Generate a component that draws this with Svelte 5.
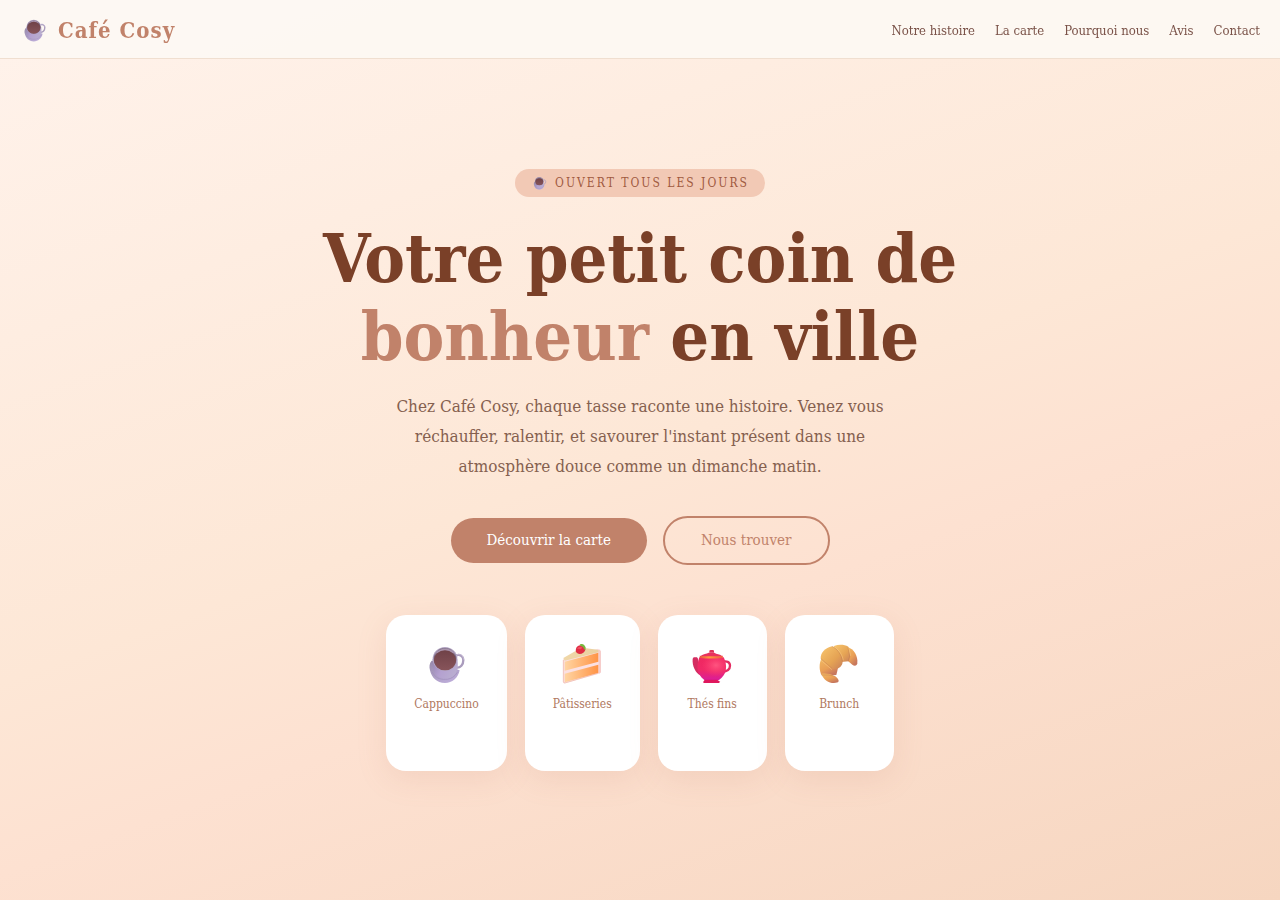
<script lang="ts">
	const links = [
		{ label: 'Notre histoire', href: '#histoire' },
		{ label: 'La carte', href: '#carte' },
		{ label: 'Pourquoi nous', href: '#pourquoi' },
		{ label: 'Avis', href: '#avis' },
		{ label: 'Contact', href: '#contact' }
	];

	const cards = [
		{ label: 'Cappuccino', icon: 'cup' },
		{ label: 'Pâtisseries', icon: 'cake' },
		{ label: 'Thés fins', icon: 'teapot' },
		{ label: 'Brunch', icon: 'croissant' }
	];
</script>

{#snippet cup()}
	<svg viewBox="20 24 120 120" aria-hidden="true">
		<defs>
			<linearGradient id="cup-body" x1="0" x2="1" y1="0" y2="0.4">
				<stop offset="0" stop-color="#9585ae" />
				<stop offset="0.5" stop-color="#b4a0d0" />
				<stop offset="1" stop-color="#b9add0" />
			</linearGradient>
			<linearGradient id="cup-saucer" x1="0" x2="0.6" y1="0" y2="1">
				<stop offset="0" stop-color="#978aa9" />
				<stop offset="1" stop-color="#bcacd8" />
			</linearGradient>
			<linearGradient id="cup-coffee" x1="0" x2="0" y1="0" y2="1">
				<stop offset="0" stop-color="#704248" />
				<stop offset="1" stop-color="#87545a" />
			</linearGradient>
		</defs>
		<path d="M34 74c-7 8-8 18-5 29 5 22 20 38 45 38 22 0 39-15 44-38Z" fill="url(#cup-saucer)" />
		<path d="M36 108c8 17 22 23 39 22 16 0 28-8 36-21" fill="none" stroke="#9f8db9" stroke-width="2" />
		<path d="M108 58c10-4 21 2 21 14 0 14-9 24-20 23" fill="none" stroke="#aa9cbd" stroke-width="7" />
		<path d="M110 56c10-3 20 3 20 15" fill="none" stroke="#d0c5de" stroke-width="2" />
		<path d="M37 69c-2 20 1 37 10 47 12 14 43 15 56 0 10-11 11-27 8-47Z" fill="url(#cup-body)" />
		<ellipse cx="74" cy="69" rx="37" ry="36" fill="#b3a5c3" />
		<ellipse cx="74" cy="69" rx="34" ry="33" fill="#77677f" />
		<path d="M43 57c9-24 52-28 62 0-15-15-46-15-62 0Z" fill="#a994ad" />
		<ellipse cx="74" cy="73" rx="33" ry="30" fill="url(#cup-coffee)" />
	</svg>
{/snippet}

{#snippet cake()}
	<svg viewBox="38 24 120 120" aria-hidden="true">
		<defs>
			<linearGradient id="cake-sponge" x1="0" x2="1" y1="0" y2="0">
				<stop offset="0" stop-color="#ffd5a3" />
				<stop offset="1" stop-color="#ff9446" />
			</linearGradient>
			<linearGradient id="cake-top" x1="0" x2="1" y1="0" y2="0">
				<stop offset="0" stop-color="#f0d7a8" />
				<stop offset="1" stop-color="#ead0a0" />
			</linearGradient>
		</defs>
		<path d="m41 70 105-32q9 2 9 9v61q-1 5-8 6L47 142q-6 1-6-5Z" fill="#fbe0e2" />
		<path d="m42 66 51-29q5-3 12-1l40 5q8 2 9 6L46 74Z" fill="url(#cake-top)" />
		<path d="m146 43q10 0 9 9v56q-1 4-7 5V50Z" fill="#f6cdcb" />
		<path d="m46 77 101-27v27L46 104Z" fill="url(#cake-sponge)" />
		<path d="m46 113 101-27v25L46 139Z" fill="url(#cake-sponge)" />
		<path d="m42 72v66q1 3 5 3l98-29" fill="none" stroke="#efb6a8" stroke-width="2" />
		<path d="M80 38c2-10 15-14 23-7 7 6 6 15-1 19-6 4-12 5-18 2-4-3-6-8-4-14Z" fill="#e02d45" />
		<path d="M83 38c3-6 10-8 16-4l-4 6Z" fill="#f04f60" />
		<path d="m91 26 5-3 8 3 5 8-1 9-4-4-3-6-7-3Z" fill="#79b83e" />
	</svg>
{/snippet}

{#snippet teapot()}
	<svg viewBox="38 24 120 120" aria-hidden="true">
		<defs>
			<linearGradient id="pot-shade" x1="0" x2="0" y1="0" y2="1">
				<stop offset="0" stop-color="#ef2860" />
				<stop offset="0.55" stop-color="#f02967" />
				<stop offset="1" stop-color="#da1d9a" />
			</linearGradient>
			<radialGradient id="pot-light" cx="0.65" cy="0.35" r="0.5">
				<stop offset="0" stop-color="#ff5580" />
				<stop offset="1" stop-color="#ff3c70" stop-opacity="0" />
			</radialGradient>
			<linearGradient id="pot-gold" x1="0" x2="1" y1="0" y2="0">
				<stop offset="0" stop-color="#e64d43" />
				<stop offset="0.4" stop-color="#ff9b3e" />
				<stop offset="1" stop-color="#ef5543" />
			</linearGradient>
		</defs>
		<path d="M130 78c11-5 22 0 22 11 0 10-9 17-24 19" fill="none" stroke="#e42c61" stroke-width="7" />
		<path d="m40 68 3-4h10l3 4v20l10 9-2 21C49 112 38 90 40 68Z" fill="#d42d60" />
		<path d="M60 64c-10 26-8 52 15 68h44c24-16 26-42 14-68Z" fill="url(#pot-shade)" />
		<path d="M60 64c-10 26-8 52 15 68h44c24-16 26-42 14-68Z" fill="url(#pot-light)" />
		<path d="m76 131-4 6q-2 4 3 4h44q4-1 1-5l-6-5Z" fill="#df175d" />
		<path d="M65 59c6-6 17-5 23-9h17c7 5 16 3 22 9l2 4H62Z" fill="#e9315c" />
		<path d="M90 50v-5q0-3 4-3h6q4 0 4 3v5Z" fill="#de3157" />
		<path d="M61 59q34 4 70 0l-2 7q-34 3-67 0Z" fill="url(#pot-gold)" />
	</svg>
{/snippet}

{#snippet croissant()}
	<svg viewBox="29 24 120 120" aria-hidden="true">
		<defs>
			<linearGradient id="bread-a" x1="0" x2="1" y1="0" y2="1">
				<stop offset="0" stop-color="#f8c66e" />
				<stop offset="0.6" stop-color="#e5a354" />
				<stop offset="1" stop-color="#c9805a" />
			</linearGradient>
			<linearGradient id="bread-b" x1="0" x2="0.6" y1="0" y2="1">
				<stop offset="0" stop-color="#f2b963" />
				<stop offset="0.6" stop-color="#e99f55" />
				<stop offset="1" stop-color="#c7775d" />
			</linearGradient>
		</defs>
		<path d="m114 33c20 5 32 27 30 49-1 8-9 9-15 4l-13-11Z" fill="url(#bread-b)" />
		<path d="M74 30c14-5 30-5 43 2l6 26-5 18-22 2-22-24Z" fill="url(#bread-a)" />
		<path d="M36 68c-7 16-7 34 1 50l44-1 5-21Z" fill="url(#bread-b)" />
		<path d="M36 113c15-1 29 0 41 8 9 6 14 13 9 18-18 7-42-2-50-26Z" fill="url(#bread-b)" />
		<path d="M68 31c-20 4-35 19-34 37l34 29c13 7 32-3 32-21 0-18-15-38-32-45Z" fill="url(#bread-a)" />
		<path d="m35 68 33 29M68 31c17 8 29 26 31 45M116 34l5 26-4 16M37 117q20-2 42 4" fill="none" stroke="#b77350" stroke-width="2" opacity="0.5" />
		<path d="m34 72 34 29M72 31c14 8 26 22 30 42M118 34l6 26" fill="none" stroke="#ffd492" stroke-width="2" opacity="0.6" />
	</svg>
{/snippet}

<header>
	<a class="logo" href="#accueil">
		{@render cup()}
		<span>Café Cosy</span>
	</a>
	<nav>
		{#each links as link}
			<a href={link.href}>{link.label}</a>
		{/each}
	</nav>
</header>

<main class="hero" id="accueil">
	<div class="badge">
		{@render cup()}
		<span>Ouvert tous les jours</span>
	</div>
	<h1>Votre petit coin de<br /><em>bonheur</em> en ville</h1>
	<p>
		Chez Café Cosy, chaque tasse raconte une histoire. Venez vous réchauffer, ralentir, et savourer
		l'instant présent dans une atmosphère douce comme un dimanche matin.
	</p>
	<div class="actions">
		<a class="btn primary" href="#carte">Découvrir la carte</a>
		<a class="btn outline" href="#contact">Nous trouver</a>
	</div>
	<div class="cards">
		{#each cards as card}
			<div class="card">
				{#if card.icon === 'cup'}
					{@render cup()}
				{:else if card.icon === 'cake'}
					{@render cake()}
				{:else if card.icon === 'teapot'}
					{@render teapot()}
				{:else}
					{@render croissant()}
				{/if}
				<span>{card.label}</span>
			</div>
		{/each}
	</div>
</main>

<style>
	:global(body) {
		margin: 0;
		font-family: 'DejaVu Serif Condensed', 'Liberation Serif', serif;
		color: #85604f;
	}

	* {
		box-sizing: border-box;
	}

	a {
		text-decoration: none;
	}

	svg {
		display: block;
		flex: none;
	}

	/* Navigation */
	header {
		position: fixed;
		top: 0;
		left: 0;
		right: 0;
		z-index: 10;
		display: flex;
		align-items: center;
		justify-content: space-between;
		min-height: 59px;
		padding: 2px 20px 0 23px;
		background: rgba(253, 248, 243, 0.92);
		border-bottom: 1px solid #f0dfd0;
	}

	.logo {
		display: flex;
		align-items: center;
		gap: 11px;
		font-size: 22px;
		font-weight: bold;
		letter-spacing: 1px;
		color: #c1826a;
	}

	.logo svg {
		width: 24px;
		height: 24px;
	}

	nav {
		display: flex;
		gap: 20px;
	}

	nav a {
		font-size: 13px;
		color: #7a5248;
	}

	/* Hero */
	.hero {
		display: flex;
		flex-direction: column;
		align-items: center;
		justify-content: center;
		min-height: 100vh;
		padding: 80px 24px 40px;
		text-align: center;
		background: linear-gradient(160deg, #fff3ec 0%, #fde7d6 50%, #fde1d1 64%, #f6d6c0 100%);
	}

	.badge {
		display: flex;
		align-items: center;
		gap: 8px;
		height: 28px;
		padding: 0 16px 0 18px;
		border-radius: 20px;
		background: #f2c9b5;
		color: #a0593f;
		font-size: 12px;
		letter-spacing: 2px;
		text-transform: uppercase;
	}

	.badge svg {
		width: 14px;
		height: 14px;
	}

	h1 {
		margin: 22px 0 16px;
		font-size: 68px;
		line-height: 78px;
		color: #7a4028;
	}

	h1 em {
		font-style: normal;
		color: #c1826a;
	}

	p {
		max-width: 520px;
		margin: 0 0 35px;
		font-size: 17px;
		line-height: 30px;
	}

	.actions {
		display: flex;
		flex-wrap: wrap;
		align-items: center;
		justify-content: center;
		gap: 16px;
		margin-bottom: 50px;
	}

	.btn {
		padding: 13px 36px;
		border-radius: 30px;
		font-size: 15px;
		line-height: 19px;
	}

	.primary {
		background: #c1826a;
		color: #fff;
	}

	.outline {
		border: 2px solid #c1826a;
		color: #c1826a;
	}

	/* Cards */
	.cards {
		display: flex;
		flex-wrap: wrap;
		justify-content: center;
		gap: 18px;
	}

	.card {
		display: flex;
		flex-direction: column;
		align-items: center;
		gap: 11px;
		min-width: 109px;
		padding: 29px 28px 57px;
		border-radius: 20px;
		background: #fff;
		box-shadow: 0 8px 30px rgba(193, 130, 106, 0.15);
		color: #b07860;
		font-size: 12px;
		line-height: 19px;
	}

	.card svg {
		width: 40px;
		height: 40px;
	}
</style>
